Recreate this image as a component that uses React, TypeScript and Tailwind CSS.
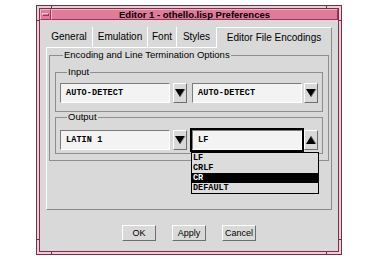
import React from "react";

const Arrow = ({ up = false }: { up?: boolean }) => (
  <svg width="12" height="18" viewBox="0 0 12 18" className="block">
    {up ? (
      <>
        <polygon points="6,5 11,13 1,13" fill="#000" />
        <polyline points="6,5 11,13" stroke="#7a7a7a" strokeWidth="1" fill="none" />
      </>
    ) : (
      <>
        <polygon points="1,5 11,5 6,13" fill="#000" />
        <polyline points="11,5 6,13" stroke="#7a7a7a" strokeWidth="1" fill="none" />
      </>
    )}
  </svg>
);

const Field = ({ text, focused = false }: { text: string; focused?: boolean }) => (
  <div
    className={
      "w-[110px] h-[20px] bg-[#f3f3f3] border border-t-[#7c7c7c] border-l-[#7c7c7c] border-r-white border-b-white flex items-center pl-[5px] " +
      (focused ? "outline-2 outline-black" : "")
    }
  >
    <span className="font-['Liberation_Mono',monospace] font-bold text-[8.5px] leading-none text-black tracking-[0.1px]">
      {text}
    </span>
  </div>
);

const ArrowBtn = ({ up = false }: { up?: boolean }) => (
  <div className="w-[14px] h-[20px] bg-[#d9d9d9] border border-t-white border-l-white border-r-[#6e6e6e] border-b-[#6e6e6e]">
    <Arrow up={up} />
  </div>
);

const Combo = ({ text, focused = false, up = false, gap }: { text: string; focused?: boolean; up?: boolean; gap: string }) => (
  <div className={"flex items-center " + gap}>
    <Field text={text} focused={focused} />
    <ArrowBtn up={up} />
  </div>
);

const Tab = ({ label, w, first = false }: { label: string; w: string; first?: boolean }) => (
  <div
    className={
      w +
      " h-[21px] pt-[4px] border-b border-b-white text-center text-[10px] leading-[12px] text-black " +
      (first ? "" : "border-l border-l-white")
    }
  >
    {label}
  </div>
);

const Btn = ({ label }: { label: string }) => (
  <div className="w-[34px] h-[16px] bg-[#d9d9d9] border border-t-white border-l-white border-r-[#6e6e6e] border-b-[#6e6e6e] flex items-center justify-center text-[9px] leading-none text-black">
    {label}
  </div>
);

export default function App() {
  return (
    <div className="w-[379px] h-[261px] bg-white pl-[36px] pt-[5px] font-['Liberation_Sans',Arial,sans-serif]">
      <div className="relative w-[306px] h-[250px] border border-[#6a3550] bg-[#f7c9d5] p-[2px]">
        {/* resize corner ticks */}
        <div className="absolute left-[14px] top-[-1px] w-px h-[3px] bg-[#6a3550]" />
        <div className="absolute right-[14px] top-[-1px] w-px h-[3px] bg-[#6a3550]" />
        <div className="absolute left-[14px] bottom-[-1px] w-px h-[3px] bg-[#6a3550]" />
        <div className="absolute right-[14px] bottom-[-1px] w-px h-[3px] bg-[#6a3550]" />
        <div className="absolute left-[-1px] top-[14px] w-[3px] h-px bg-[#6a3550]" />
        <div className="absolute right-[-1px] top-[14px] w-[3px] h-px bg-[#6a3550]" />
        <div className="absolute left-[-1px] bottom-[14px] w-[3px] h-px bg-[#6a3550]" />
        <div className="absolute right-[-1px] bottom-[14px] w-[3px] h-px bg-[#6a3550]" />

        <div className="h-full border border-[#6a3550] flex flex-col bg-[#d9d9d9]">
          {/* title bar */}
          <div className="h-[11px] flex bg-[#e27a99]">
            <div className="w-[11px] h-[11px] border border-t-[#f5b3c6] border-l-[#f5b3c6] border-r-[#8c3a58] border-b-[#8c3a58] flex items-center justify-center">
              <div className="w-[7px] h-[3px] border border-t-[#f8c8d6] border-l-[#f8c8d6] border-r-[#8c3a58] border-b-[#8c3a58]" />
            </div>
            <div className="flex-1 h-[11px] border border-t-[#f5b3c6] border-l-[#f5b3c6] border-r-[#8c3a58] border-b-[#8c3a58] flex items-center justify-center text-[9.5px] font-bold leading-none text-black">
              Editor 1 - othello.lisp Preferences
            </div>
          </div>

          {/* body */}
          <div className="flex-1 flex flex-col pl-[6px] pt-[7px]">
            <div className="w-[286px] flex">
              <Tab label="General" w="w-[46px]" first />
              <Tab label="Emulation" w="w-[55px]" />
              <Tab label="Font" w="w-[29px]" />
              <Tab label="Styles" w="w-[40px]" />
              <div className="w-[116px] h-[21px] pt-[4px] border-t border-l border-t-white border-l-white border-r border-r-[#8a8a8a] text-center text-[10px] leading-[12px] text-black">
                Editor File Encodings
              </div>
            </div>

            <div className="w-[286px] h-[162px] border-l border-l-white border-r border-r-[#8a8a8a] border-b border-b-[#8a8a8a] pt-[2px] px-[2px]">
              <fieldset className="border border-[#8e8e8e] px-[5px] pb-[6px]">
                <legend className="ml-[8px] px-[1px] text-[9.5px] leading-[10px] text-black">
                  Encoding and Line Termination Options
                </legend>
                <fieldset className="mt-[7px] border border-[#8e8e8e] px-[4px] pt-[6px] pb-[8px]">
                  <legend className="ml-[7px] px-[1px] text-[9.5px] leading-[10px] text-black">Input</legend>
                  <div className="flex items-center gap-[5px]">
                    <Combo text="AUTO-DETECT" gap="gap-[3px]" />
                    <Combo text="AUTO-DETECT" gap="gap-[2px]" />
                  </div>
                </fieldset>
                <fieldset className="border border-[#8e8e8e] px-[4px] pt-[8px] pb-[3px]">
                  <legend className="ml-[7px] px-[1px] text-[9.5px] leading-[10px] text-black">Output</legend>
                  <div className="flex items-center gap-[5px]">
                    <Combo text="LATIN 1" gap="gap-[3px]" />
                    <div className="relative">
                      <Combo text="LF" focused up gap="gap-[2px]" />
                      <div className="absolute left-[-1px] top-[22px] w-[128px] border border-black bg-[#dcdcdc] z-10 font-['Liberation_Mono',monospace] font-bold text-[8.5px] text-black">
                        <div className="h-[10px] leading-[10px] pl-[1px]">LF</div>
                        <div className="h-[10px] leading-[10px] pl-[1px]">CRLF</div>
                        <div className="h-[10px] leading-[10px] pl-[1px] bg-black text-white">CR</div>
                        <div className="h-[10px] leading-[10px] pl-[1px]">DEFAULT</div>
                      </div>
                    </div>
                  </div>
                </fieldset>
              </fieldset>
            </div>

            <div className="mt-[15px] flex justify-center gap-[16px] pr-[6px]">
              <Btn label="OK" />
              <Btn label="Apply" />
              <Btn label="Cancel" />
            </div>
          </div>
        </div>
      </div>
    </div>
  );
}
